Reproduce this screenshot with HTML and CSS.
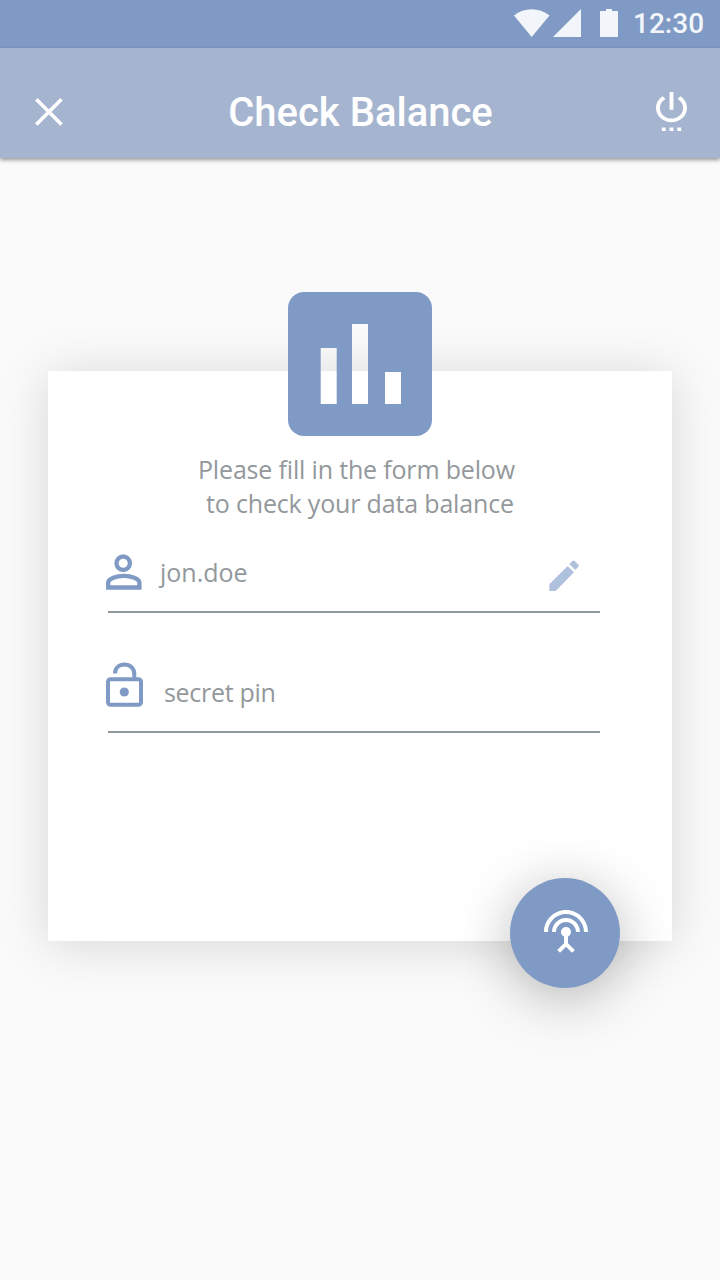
FILE: index.html
```html
<!DOCTYPE html>
<html lang="en">
<head>
<meta charset="utf-8">
<title>Check Balance</title>
<link rel="stylesheet" href="styles.css">
</head>
<body>
<div class="screen">
  <div class="status-bar">
    <svg class="status-icons" viewBox="0 0 106 30" fill="currentColor">
      <path d="M0 7.5C10-1 25-1 35.5 7.5L17.7 29Z"/>
      <path d="M67 1v28H39Z"/>
      <path d="M86 3h6V1h6v2h6v26H86Z"/>
    </svg>
    <span class="clock">12:30</span>
  </div>
  <header class="app-bar">
    <svg class="close-icon" viewBox="0 0 28 28" fill="none" stroke="currentColor" stroke-width="3.6"><path d="M1.3 1.3l25.2 25.2M26.5 1.3l-25.2 25.2"/></svg>
    <h1 class="title">Check Balance</h1>
    <svg class="power-icon" viewBox="4 2 16 22" preserveAspectRatio="none" fill="currentColor"><path d="M7 24h2v-2H7v2zm4 0h2v-2h-2v2zm2-22h-2v10h2V2zm3.56 2.44l-1.45 1.45C16.84 6.94 18 8.83 18 11c0 3.31-2.69 6-6 6s-6-2.69-6-6c0-2.17 1.16-4.06 2.88-5.12L7.44 4.44C5.36 5.88 4 8.28 4 11c0 4.42 3.58 8 8 8s8-3.58 8-8c0-2.72-1.36-5.12-3.44-6.56zM15 24h2v-2h-2v2z"/></svg>
  </header>
  <main class="content">
    <section class="card">
      <svg class="badge" viewBox="0 0 144 144"><path fill="currentColor" fill-rule="evenodd" d="M16 0h112a16 16 0 0 1 16 16v112a16 16 0 0 1-16 16H16a16 16 0 0 1-16-16V16A16 16 0 0 1 16 0ZM32.7 56v56h16V56ZM64 32v80h16V32ZM97 80v32h16V80Z"/></svg>
      <div class="intro">
        <p class="intro-line">Please fill in the form below</p>
        <p class="intro-line intro-second">to check your data balance</p>
      </div>
      <div class="field user-field">
        <svg class="person-icon" viewBox="0 0 36 36" fill="none" stroke="currentColor" stroke-width="4.3"><circle cx="17.2" cy="9.2" r="6.7"/><path d="M2.2 33.5V28.5C2.2 24.5 10.5 21.8 17.8 21.8s15.6 2.7 15.6 6.7v5Z"/></svg>
        <span class="value user-value">jon.doe</span>
        <svg class="edit-icon" viewBox="0 0 30 31" fill="currentColor"><path d="M.3 24.3V31h6.4L25 12.3 18.7 6ZM20.3 4l3-3q1.2-1.2 2.4 0l3.5 3.6q1.2 1.2 0 2.4l-3 3.1Z"/></svg>
      </div>
      <div class="field pin-field">
        <svg class="lock-icon" viewBox="0 0 37 45" fill="none" stroke="currentColor" stroke-width="4"><rect x="2" y="17.2" width="33" height="25.5" rx="2.5"/><path d="M9 11.5C9 6 13 2.4 18.5 2.4S28.3 6.5 28.3 12v5"/><circle cx="18.3" cy="30" r="4.6" fill="currentColor" stroke="none"/></svg>
        <span class="value pin-value">secret pin</span>
      </div>
      <button class="fab" aria-label="Check">
        <svg class="antenna-icon" viewBox="0 0 24 24" fill="currentColor"><path d="M12 5c-3.87 0-7 3.13-7 7h2c0-2.76 2.24-5 5-5s5 2.24 5 5h2c0-3.87-3.13-7-7-7zm1 9.29c.88-.39 1.5-1.26 1.5-2.29 0-1.38-1.12-2.5-2.5-2.5S9.5 10.62 9.5 12c0 1.02.62 1.9 1.5 2.29v3.3L7.59 21 9 22.41l3-3 3 3L16.41 21 13 17.59v-3.3zM12 1C5.93 1 1 5.93 1 12h2c0-4.97 4.03-9 9-9s9 4.03 9 9h2c0-6.07-4.93-11-11-11z"/></svg>
      </button>
    </section>
  </main>
</div>
</body>
</html>
```
FILE: styles.css
```css
* { box-sizing: border-box; }
body { margin: 0; background: #fafafa; }
svg { display: block; flex: none; }
.screen {
  width: 720px;
  height: 1280px;
  overflow: hidden;
  background: #fafafa;
  font-family: "Open Sans", "Noto Sans", sans-serif;
}
.status-bar {
  height: 48px;
  padding: 0 16px 0 0;
  display: flex;
  justify-content: flex-end;
  align-items: center;
  gap: 13px;
  background: #7f9ac5;
  color: #f2f5f9;
}
.status-icons { width: 106px; height: 30px; margin-top: -2px; }
.clock {
  width: 71px;
  font: 500 28px/46px Roboto, sans-serif;
  white-space: nowrap;
}
.app-bar {
  height: 110px;
  padding: 17px 33px 0 35px;
  display: flex;
  justify-content: space-between;
  align-items: center;
  background: #a5b5d0;
  color: #fff;
  box-shadow: 0 2px 4px rgba(0, 0, 0, .4);
}
.close-icon { width: 28px; height: 28px; }
.title {
  margin: 0;
  padding: 2px 0 0 2px;
  font: 500 40px/48px Roboto, sans-serif;
  white-space: nowrap;
}
.power-icon { width: 31px; height: 39px; }
.content { padding: 213px 48px 0; }
.card {
  height: 570px;
  display: flex;
  flex-direction: column;
  background: #fff;
  box-shadow: 0 4px 46px rgba(0, 0, 0, .145);
}
.badge {
  width: 144px;
  height: 144px;
  margin: -79px auto 0;
  color: #7f9ac5;
}
.intro { margin: 16px 0 0 150px; }
.intro-line {
  margin: 0;
  font-size: 25px;
  line-height: 34px;
  letter-spacing: -.17px;
  color: #93989b;
  white-space: nowrap;
}
.intro-second { padding-left: 8px; }
.field {
  width: 492px;
  margin-left: 60px;
  display: flex;
  align-items: flex-start;
  border-bottom: 2px solid #92999c;
}
.user-field { height: 76px; margin-top: 17px; padding-top: 17px; }
.pin-field { height: 120px; padding-top: 49px; }
.person-icon { width: 36px; height: 36px; margin-left: -2px; color: #7f9ac5; }
.lock-icon { width: 37px; height: 45px; margin-left: -2px; color: #7f9ac5; }
.value {
  font-size: 25px;
  line-height: 34px;
  letter-spacing: -.3px;
  color: #93989b;
  white-space: nowrap;
}
.user-value { margin: 1px 0 0 18px; letter-spacing: 0; }
.pin-value { margin: 13px 0 0 21px; }
.edit-icon { width: 30px; height: 31px; margin: 6px 21px 0 auto; color: #b0c1dd; }
.fab {
  width: 110px;
  height: 110px;
  margin: auto 52px -47px auto;
  padding: 0 0 2px 2px;
  flex: none;
  border: 0;
  border-radius: 50%;
  display: flex;
  align-items: center;
  justify-content: center;
  background: #7f9ac5;
  color: #fff;
  box-shadow: 0 10px 56px rgba(0, 0, 0, .28);
}
.antenna-icon { width: 48px; height: 48px; }
```
